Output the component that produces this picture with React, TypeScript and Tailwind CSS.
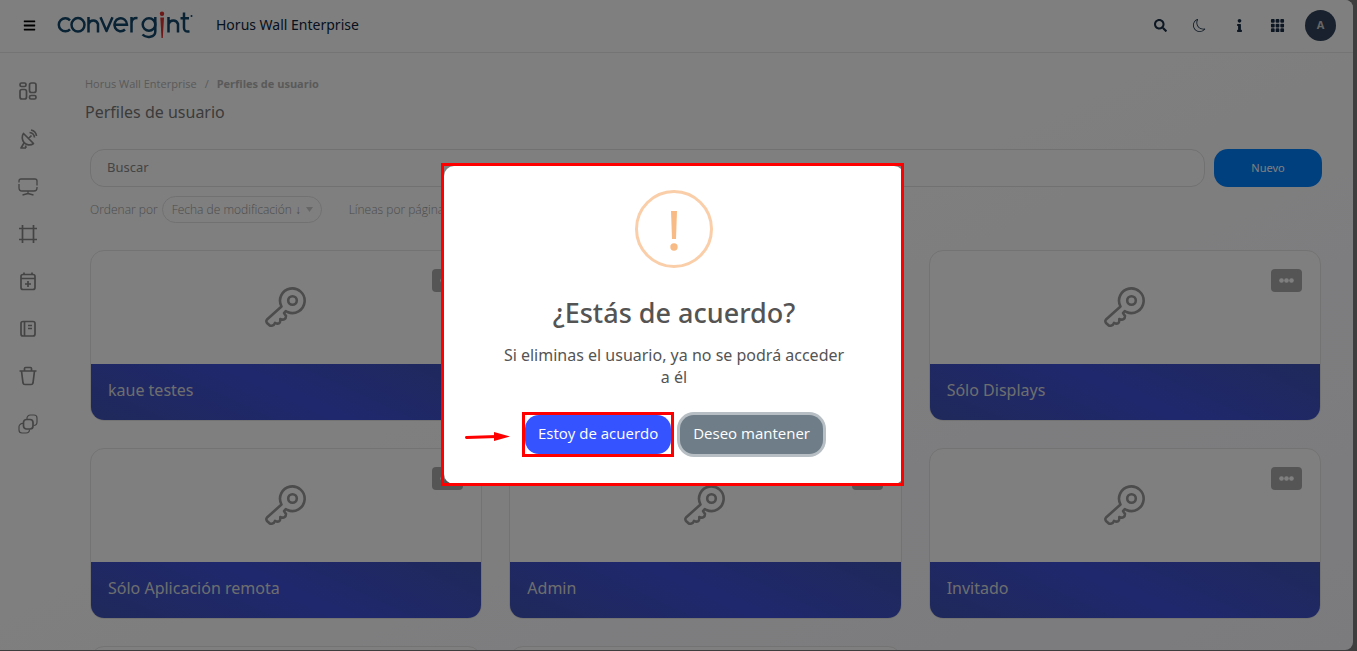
import { FaBars, FaSearch, FaInfo } from "react-icons/fa";
import { BsMoon, BsGrid3X3GapFill } from "react-icons/bs";

const profiles = [
  { name: "kaue testes" },
  null,
  { name: "Sólo Displays" },
  { name: "Sólo Aplicación remota" },
  { name: "Admin" },
  { name: "Invitado" },
  null,
  null,
];

const icon = {
  className: "size-6",
  viewBox: "0 0 24 24",
  fill: "none",
  stroke: "currentColor",
  strokeWidth: "1.700",
  strokeLinejoin: "round",
} as const;

function Logo() {
  return (
    <svg width="136" height="32" viewBox="0 0 136 32" role="img" aria-label="convergint">
      <g fill="none" stroke="#12466a" strokeWidth="2.500">
        <path d="M13 11.300A6.500 6.500 0 1 0 13 20.300" />
        <ellipse cx="21" cy="15.800" rx="6.500" ry="6.700" />
        <path d="M31.500 23.500V8M31.500 15a5 5 0 0 1 9.500 0v8.500" />
        <path d="M43.500 8.300l6 13.700 6-13.700" strokeLinejoin="round" />
        <path d="M57.500 15.800h12.500a6.300 6.500 0 1 0-2 4.700" />
        <path d="M74.500 23.500V8M74.500 14.500c0-4 2.500-5.800 6-5.300" />
        <circle cx="92" cy="15.500" r="6.300" />
        <path d="M98.300 8v14.500c0 6-9 7-12.800 3" />
        <path d="M111.500 23.500V8M111.500 15a5 5 0 0 1 9.500 0v8.500" />
        <path d="M127 3.500v15.500c0 3 2 4 5.500 3.300M123.500 9.200h8.500" />
      </g>
      <circle cx="105" cy="4.700" r="2.200" fill="#d8322f" />
      <path d="M103.300 8.500h3.700l-1.200 20.500h-1.300z" fill="#d8322f" />
      <circle cx="134.500" cy="7" r="1" fill="#12466a" />
    </svg>
  );
}

function KeyIcon() {
  return (
    <svg
      width="42"
      height="42"
      viewBox="0 0 42 42"
      fill="none"
      stroke="#989898"
      strokeWidth="2.600"
      strokeLinejoin="round"
    >
      <path d="M16.500 19.500A12.300 12.300 0 1 1 22.500 25l-1.700-1-1.800 2 2 3q0 2.300-1.500 3.200t-4.200-.200q.300 3.500-1.300 4.300t-4-.400q-.800 2.200-2.500 2.600T4.800 38.500L2 36q-1.300-2 0-3.500z" />
      <circle cx="27.500" cy="13.500" r="4.300" />
    </svg>
  );
}

function ProfileCard({ name }: { name?: string }) {
  return (
    <li className="overflow-hidden rounded-[14px] border border-[#e6e6e6] bg-white">
      <div className="grid h-[113px] grid-cols-3 items-center">
        <div className="col-start-2 justify-self-center">
          <KeyIcon />
        </div>
        <button
          aria-label="Opciones"
          className="mt-[18px] mr-[18px] flex h-[23px] w-[31px] items-center justify-center self-start justify-self-end rounded bg-[#ababab]"
        >
          <svg width="15" height="5" viewBox="0 0 15 5" fill="#fff">
            <circle cx="2.500" cy="2.500" r="2.300" />
            <circle cx="7.500" cy="2.500" r="2.300" />
            <circle cx="12.500" cy="2.500" r="2.300" />
          </svg>
        </button>
      </div>
      <h2 className="h-14 bg-linear-[25deg,#4052b4,#3f51da_50%,#4052b4] px-[17px] pt-3.5 text-base">
        {name}
      </h2>
    </li>
  );
}

function Sidebar() {
  return (
    <nav className="w-14 shrink-0 pt-[26px]">
      <ul className="flex h-[357px] flex-col items-center justify-between text-[#888]">
        <li><a href="#" aria-label="Panel"><svg {...icon}>
          <rect x="4" y="4" width="6" height="3.500" rx="1.500" /><rect x="4" y="10.500" width="6.500" height="9.500" rx="2" />
          <rect x="13.500" y="4" width="6.500" height="9.500" rx="2" /><rect x="13.500" y="16.500" width="6.500" height="3.500" rx="1.500" />
        </svg></a></li>
        <li><a href="#" aria-label="Fuentes"><svg {...icon}>
          <path d="M7.500 6.500l10 10c-3 2.500-7.500 1.500-9.500-1s-2.500-6.500-.5-9zM12.500 11.500l3-3M8 16l-3 5h5M9.500 18.500L10 21M13.500 5.500a5.500 5.500 0 0 1 5 5M15 3a7 7 0 0 1 5.500 6" />
        </svg></a></li>
        <li><a href="#" aria-label="Pantallas"><svg {...icon} strokeWidth="1.300">
          <path d="M3 8.500V7a2 2 0 0 1 2-2h14a2 2 0 0 1 2 2v4.500M21 13v1a3 3 0 0 1-3 3H6a3 3 0 0 1-3-3v-4M12 17v2.500M6.500 21l5.500-1.500 5.500 1.500" />
        </svg></a></li>
        <li><a href="#" aria-label="Marcos"><svg {...icon}>
          <path d="M6.500 3v18M17.500 3v18M3 6.500h18M3 17.500h18" />
        </svg></a></li>
        <li><a href="#" aria-label="Agenda"><svg {...icon}>
          <rect x="5" y="5.500" width="14" height="15" rx="2" /><path d="M5 9.500h14M8 3.500v2M16 3.500v2M12 12v6M9 15h6" />
        </svg></a></li>
        <li><a href="#" aria-label="Registros"><svg {...icon}>
          <rect x="5" y="4.500" width="14" height="14.500" rx="2" /><path d="M8.500 4.500V19M12 8.500h4M12 11.500h4" />
        </svg></a></li>
        <li><a href="#" aria-label="Papelera"><svg {...icon}>
          <path d="M3.500 7h17M8.500 7V4.500a1 1 0 0 1 1-1h5a1 1 0 0 1 1 1V7M5.500 7L7 19a2 2 0 0 0 2 1.500h6A2 2 0 0 0 17 19l1.500-12" />
        </svg></a></li>
        <li><a href="#" aria-label="Grupos"><svg {...icon}>
          <rect x="7.500" y="7.500" width="9.500" height="9.500" rx="3" />
          <path strokeWidth="1.200" d="M11 7a3.500 3.500 0 0 1 3.500-4H18a3 3 0 0 1 3 3v4a3.500 3.500 0 0 1-3.500 3.500M7 11.500a3.500 3.500 0 0 0-4 3V18a3 3 0 0 0 3 3h4a3.500 3.500 0 0 0 3.500-3.500" />
        </svg></a></li>
      </ul>
    </nav>
  );
}

function ConfirmDialog() {
  return (
    <div className="fixed inset-0 flex items-center justify-center bg-black/50 pr-[9px] pb-px">
      <div
        role="alertdialog"
        aria-labelledby="confirm-title"
        className="relative flex w-[460px] flex-col items-center rounded-[10px] bg-white px-10 pt-6 pb-[30px] text-center text-[#545454]"
      >
        <svg width="78" height="78" viewBox="0 0 78 78">
          <circle cx="39" cy="39" r="37.500" fill="none" stroke="#facea8" strokeWidth="3" />
          <path d="M36 21h6l-1 28h-4z" fill="#f8bb86" />
          <circle cx="39" cy="57" r="3.700" fill="#f8bb86" />
        </svg>
        <h2 id="confirm-title" className="mt-[25px] text-[27px] leading-10 font-medium">
          ¿Estás de acuerdo?
        </h2>
        <p className="mt-[11px] px-4 text-base leading-[22px]">
          Si eliminas el usuario, ya no se podrá acceder a él
        </p>
        <div className="mt-[27px] flex gap-[9px] font-['Open_Sans',sans-serif] text-[15px] text-white">
          <div className="relative">
            <button className="block h-[39px] rounded-[14px] bg-[#3553ff] px-[13px] pb-0.5">
              Estoy de acuerdo
            </button>
            <span className="pointer-events-none absolute -inset-[3px] border-[3px] border-[#fe0000]" />
          </div>
          <button className="h-[39px] rounded-[14px] bg-[#6e7d88] px-[13px] pb-0.5 ring-[3px] ring-[#b7bec4]">
            Deseo mantener
          </button>
        </div>
        <svg className="absolute bottom-[41px] left-[21px]" width="45" height="12" viewBox="0 0 45 12">
          <path d="M1.500 6.500L32 5.500" stroke="#fe0000" strokeWidth="3" strokeLinecap="round" />
          <path d="M29 1l16 4.500L29 10z" fill="#fe0000" />
        </svg>
        <span className="pointer-events-none absolute -top-[3px] right-0 -bottom-[2px] -left-[3px] border-[3px] border-[#fe0000]" />
      </div>
    </div>
  );
}

export default function App() {
  return (
    <div className="h-screen overflow-hidden bg-[#7c7c7c] pr-1 pb-px font-['Noto_Sans',sans-serif]">
      <div className="flex h-full flex-col overflow-hidden rounded-r-lg bg-linear-to-br from-white from-40% to-[#f7f7fd]">
        <header className="flex h-[53px] shrink-0 items-center border-b border-[#e8e8e8] bg-white pr-[17px] pb-0.5 pl-[23px] text-[#1b2f48]">
          <button aria-label="Menú" className="text-black">
            <FaBars size={13} />
          </button>
          <a href="#" className="ml-[21px]">
            <Logo />
          </a>
          <span className="ml-[23px] text-sm text-[#0c2440]">Horus Wall Enterprise</span>
          <div className="ml-auto flex items-center">
            <button aria-label="Buscar"><FaSearch size={13} /></button>
            <button aria-label="Modo oscuro" className="ml-[26px]"><BsMoon size={13} /></button>
            <button aria-label="Información" className="ml-[27px]"><FaInfo size={13} /></button>
            <button aria-label="Aplicaciones" className="ml-6"><BsGrid3X3GapFill size={15} /></button>
            <button className="ml-5 size-[31px] rounded-full bg-[#30435a] text-[11px] font-bold text-[#ccc]">A</button>
          </div>
        </header>
        <div className="flex min-h-0 flex-1">
          <Sidebar />
          <main className="flex-1 pt-[23px] pr-8 pl-[34px]">
            <nav className="-ml-[5px] flex gap-2 font-['Open_Sans',sans-serif] text-[11px] leading-4 text-[#b4b4b4]">
              <a href="#">Horus Wall Enterprise</a>
              <span>/</span>
              <span className="font-bold">Perfiles de usuario</span>
            </nav>
            <h1 className="mt-1.5 -ml-[5px] text-base leading-7 text-[#777]">Perfiles de usuario</h1>
            <div className="mt-[23px] -mr-px flex gap-[9px]">
              <input
                aria-label="Buscar"
                placeholder="Buscar"
                className="h-[38px] min-w-0 flex-1 rounded-[14px] border border-[#e2e2e2] bg-white px-4 pb-0.5 text-[13px] placeholder:text-[#888]"
              />
              <button className="w-[108px] rounded-[14px] bg-[#0080ff] text-[11px] text-white">Nuevo</button>
            </div>
            <div className="mt-[9px] flex items-center font-['Open_Sans',sans-serif] text-xs font-light text-[#999]">
              <label htmlFor="sort">Ordenar por</label>
              <div className="relative ml-1">
                <select
                  id="sort"
                  className="block h-[27px] w-40 appearance-none rounded-[14px] border border-[#e2e2e2] pl-[9px]"
                >
                  <option>Fecha de modificación ↓</option>
                </select>
                <svg className="pointer-events-none absolute top-[11px] right-[9px]" width="7" height="5" viewBox="0 0 7 5">
                  <path d="M0 0h7L3.500 5z" fill="#ccc" />
                </svg>
              </div>
              <span className="ml-[27px]">Líneas por página</span>
            </div>
            <ul className="mt-[27px] grid grid-cols-3 gap-[27px] text-[#ddd]">
              {profiles.map((profile, i) => (
                <ProfileCard key={i} name={profile?.name} />
              ))}
            </ul>
          </main>
        </div>
      </div>
      <ConfirmDialog />
    </div>
  );
}
